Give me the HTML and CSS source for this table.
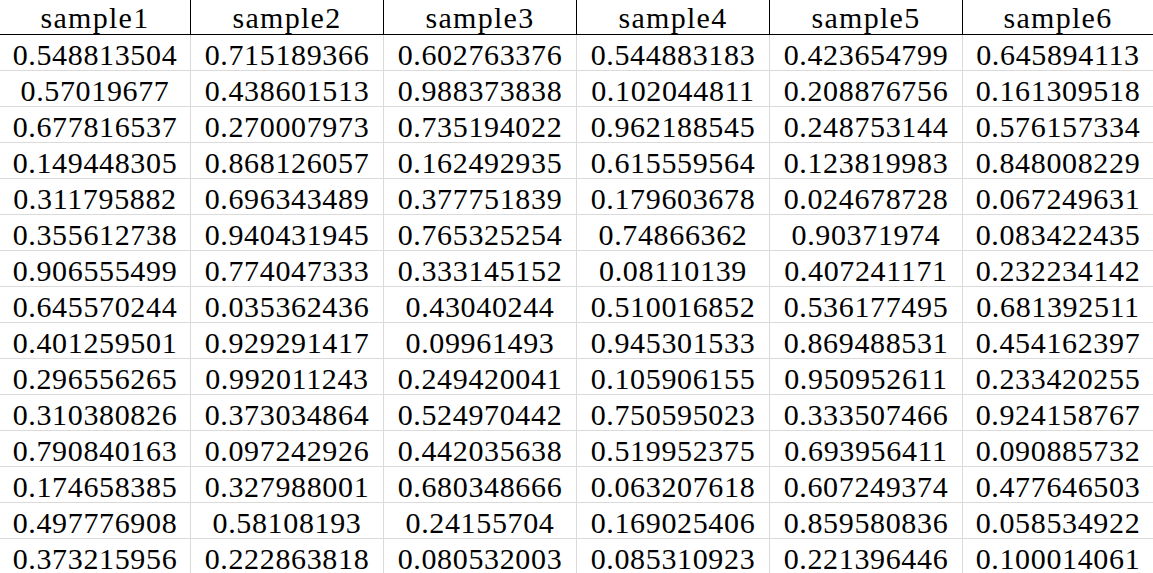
FILE: index.html
```html
<!DOCTYPE html>
<html>
<head>
<meta charset="utf-8">
<link rel="stylesheet" href="styles.css">
</head>
<body>
<div class="sheet">
<div class="hd">sample1</div><div class="hd">sample2</div><div class="hd">sample3</div><div class="hd">sample4</div><div class="hd">sample5</div><div class="hd">sample6</div>
<div class="c">0.548813504</div><div class="c">0.715189366</div><div class="c">0.602763376</div><div class="c">0.544883183</div><div class="c">0.423654799</div><div class="c">0.645894113</div>
<div class="c">0.57019677</div><div class="c">0.438601513</div><div class="c">0.988373838</div><div class="c">0.102044811</div><div class="c">0.208876756</div><div class="c">0.161309518</div>
<div class="c">0.677816537</div><div class="c">0.270007973</div><div class="c">0.735194022</div><div class="c">0.962188545</div><div class="c">0.248753144</div><div class="c">0.576157334</div>
<div class="c">0.149448305</div><div class="c">0.868126057</div><div class="c">0.162492935</div><div class="c">0.615559564</div><div class="c">0.123819983</div><div class="c">0.848008229</div>
<div class="c">0.311795882</div><div class="c">0.696343489</div><div class="c">0.377751839</div><div class="c">0.179603678</div><div class="c">0.024678728</div><div class="c">0.067249631</div>
<div class="c">0.355612738</div><div class="c">0.940431945</div><div class="c">0.765325254</div><div class="c">0.74866362</div><div class="c">0.90371974</div><div class="c">0.083422435</div>
<div class="c">0.906555499</div><div class="c">0.774047333</div><div class="c">0.333145152</div><div class="c">0.08110139</div><div class="c">0.407241171</div><div class="c">0.232234142</div>
<div class="c">0.645570244</div><div class="c">0.035362436</div><div class="c">0.43040244</div><div class="c">0.510016852</div><div class="c">0.536177495</div><div class="c">0.681392511</div>
<div class="c">0.401259501</div><div class="c">0.929291417</div><div class="c">0.09961493</div><div class="c">0.945301533</div><div class="c">0.869488531</div><div class="c">0.454162397</div>
<div class="c">0.296556265</div><div class="c">0.992011243</div><div class="c">0.249420041</div><div class="c">0.105906155</div><div class="c">0.950952611</div><div class="c">0.233420255</div>
<div class="c">0.310380826</div><div class="c">0.373034864</div><div class="c">0.524970442</div><div class="c">0.750595023</div><div class="c">0.333507466</div><div class="c">0.924158767</div>
<div class="c">0.790840163</div><div class="c">0.097242926</div><div class="c">0.442035638</div><div class="c">0.519952375</div><div class="c">0.693956411</div><div class="c">0.090885732</div>
<div class="c">0.174658385</div><div class="c">0.327988001</div><div class="c">0.680348666</div><div class="c">0.063207618</div><div class="c">0.607249374</div><div class="c">0.477646503</div>
<div class="c">0.497776908</div><div class="c">0.58108193</div><div class="c">0.24155704</div><div class="c">0.169025406</div><div class="c">0.859580836</div><div class="c">0.058534922</div>
<div class="c">0.373215956</div><div class="c">0.222863818</div><div class="c">0.080532003</div><div class="c">0.085310923</div><div class="c">0.221396446</div><div class="c">0.100014061</div>
</div>
</body>
</html>
```

FILE: styles.css
```css
html, body {
  margin: 0;
  padding: 0;
  background: #ffffff;
  overflow: hidden;
}
.sheet {
  display: grid;
  grid-template-columns: 191px 193px 193px 193px 193px 190px;
  font-family: "Liberation Serif", "Times New Roman", serif;
  font-size: 30px;
  color: #000000;
}
.hd, .c {
  box-sizing: border-box;
  text-align: center;
  white-space: nowrap;
  overflow: hidden;
}
.hd {
  height: 35px;
  padding-top: 2px;
  line-height: 32px;
  letter-spacing: 1.3px;
  border-right: 1px solid #000000;
  border-bottom: 1px solid #000000;
}
.c {
  height: 36px;
  padding-top: 4px;
  line-height: 31px;
  letter-spacing: 0.65px;
  border-right: 1px solid #dadada;
  border-bottom: 1px solid #dadada;
}
.hd:nth-child(6n), .c:nth-child(6n) {
  border-right: none;
}
```
